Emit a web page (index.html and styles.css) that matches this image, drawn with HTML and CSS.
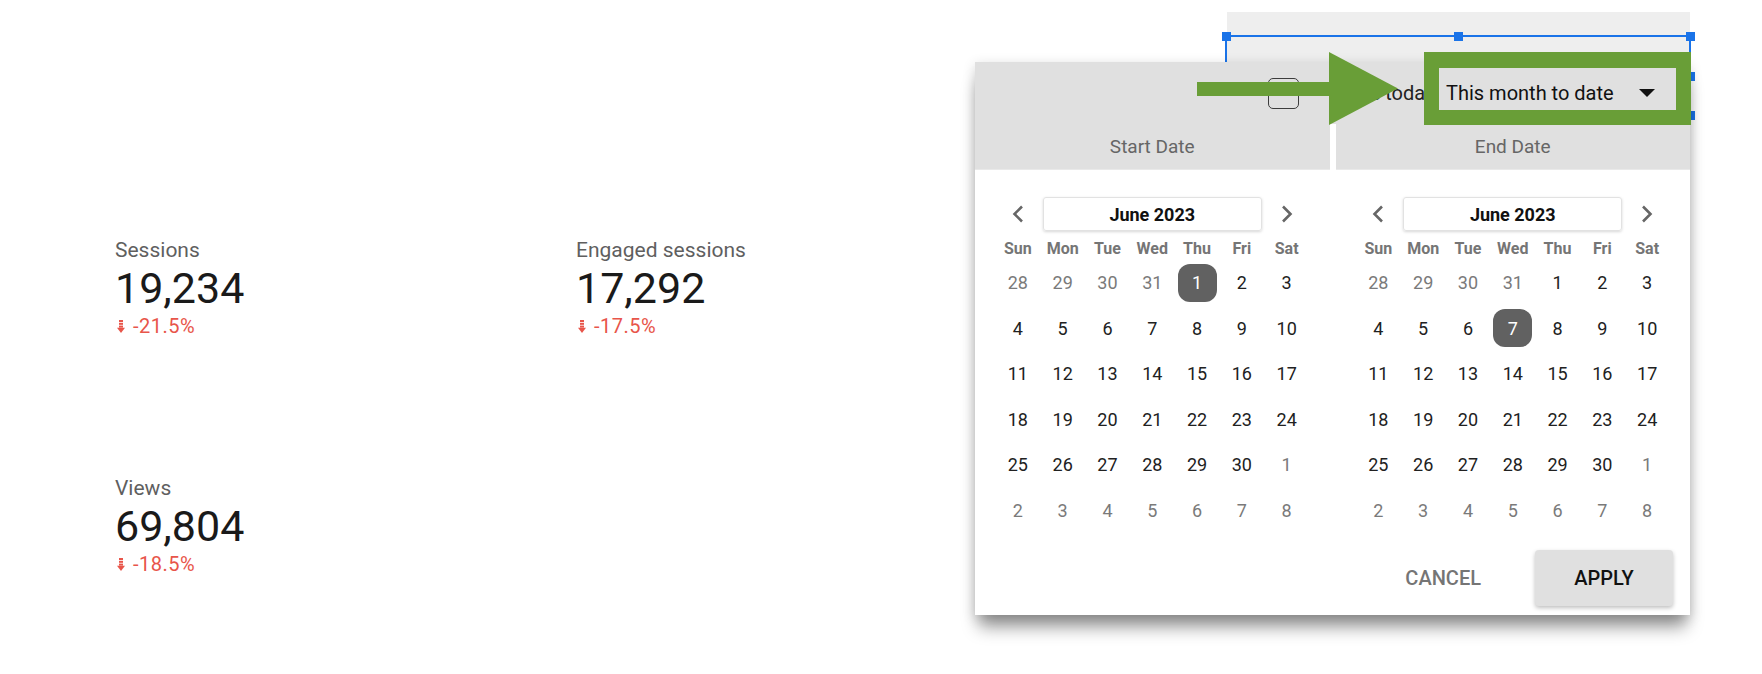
FILE: index.html
```html
<!DOCTYPE html>
<html lang="en">
<head>
<meta charset="utf-8">
<title>Date range control</title>
<link rel="stylesheet" href="styles.css">
</head>
<body>
<div class="page">
  <section class="metrics">
    <div class="metric">
      <div class="metric-label">Sessions</div>
      <div class="metric-value">19,234</div>
      <div class="metric-delta"><svg class="down-icon" width="8" height="13" viewBox="0 0 8 13"><rect x="2" y="0" width="4" height="2"/><rect x="2" y="2.8" width="4" height="2"/><rect x="2" y="5.6" width="4" height="2"/><polygon points="0,7.8 8,7.8 4,13"/></svg><span>-21.5%</span></div>
    </div>
    <div class="metric">
      <div class="metric-label">Engaged sessions</div>
      <div class="metric-value">17,292</div>
      <div class="metric-delta"><svg class="down-icon" width="8" height="13" viewBox="0 0 8 13"><rect x="2" y="0" width="4" height="2"/><rect x="2" y="2.8" width="4" height="2"/><rect x="2" y="5.6" width="4" height="2"/><polygon points="0,7.8 8,7.8 4,13"/></svg><span>-17.5%</span></div>
    </div>
    <div class="metric">
      <div class="metric-label">Views</div>
      <div class="metric-value">69,804</div>
      <div class="metric-delta"><svg class="down-icon" width="8" height="13" viewBox="0 0 8 13"><rect x="2" y="0" width="4" height="2"/><rect x="2" y="2.8" width="4" height="2"/><rect x="2" y="5.6" width="4" height="2"/><polygon points="0,7.8 8,7.8 4,13"/></svg><span>-18.5%</span></div>
    </div>
  </section>

  <div class="control-bg"></div>
  <div class="selection"></div>
  <div class="handle h-tl"></div>
  <div class="handle h-tm"></div>
  <div class="handle h-tr"></div>
  <div class="handle h-rm"></div>
  <div class="handle h-br"></div>

  <div class="popup">
    <div class="popup-top">
      <div class="checkbox"></div>
      <div class="auto-label">since today</div>
      <div class="range-select">
        <span>This month to date</span>
        <svg width="16" height="8" viewBox="0 0 16 8"><polygon points="0,0 16,0 8,8" fill="#111"/></svg>
      </div>
    </div>
    <div class="tabs">
      <div class="tab">Start Date</div>
      <div class="tab">End Date</div>
    </div>
    <div class="calendars">
      <div class="cal">
        <div class="cal-nav">
          <div class="nav-btn"><svg width="14" height="18" viewBox="0 0 14 18"><path d="M11 1.5 L3.5 9 L11 16.5" fill="none" stroke="#666" stroke-width="2.6"/></svg></div>
          <div class="month">June 2023</div>
          <div class="nav-btn"><svg width="14" height="18" viewBox="0 0 14 18"><path d="M3 1.5 L10.5 9 L3 16.5" fill="none" stroke="#666" stroke-width="2.6"/></svg></div>
        </div>
        <div class="grid weekdays">
          <div>Sun</div><div>Mon</div><div>Tue</div><div>Wed</div><div>Thu</div><div>Fri</div><div>Sat</div>
        </div>
        <div class="grid days">
          <div class="day muted">28</div><div class="day muted">29</div><div class="day muted">30</div><div class="day muted">31</div><div class="day sel"><span>1</span></div><div class="day">2</div><div class="day">3</div>
          <div class="day">4</div><div class="day">5</div><div class="day">6</div><div class="day">7</div><div class="day">8</div><div class="day">9</div><div class="day">10</div>
          <div class="day">11</div><div class="day">12</div><div class="day">13</div><div class="day">14</div><div class="day">15</div><div class="day">16</div><div class="day">17</div>
          <div class="day">18</div><div class="day">19</div><div class="day">20</div><div class="day">21</div><div class="day">22</div><div class="day">23</div><div class="day">24</div>
          <div class="day">25</div><div class="day">26</div><div class="day">27</div><div class="day">28</div><div class="day">29</div><div class="day">30</div><div class="day muted">1</div>
          <div class="day muted">2</div><div class="day muted">3</div><div class="day muted">4</div><div class="day muted">5</div><div class="day muted">6</div><div class="day muted">7</div><div class="day muted">8</div>
        </div>
      </div>
      <div class="cal">
        <div class="cal-nav">
          <div class="nav-btn"><svg width="14" height="18" viewBox="0 0 14 18"><path d="M11 1.5 L3.5 9 L11 16.5" fill="none" stroke="#666" stroke-width="2.6"/></svg></div>
          <div class="month">June 2023</div>
          <div class="nav-btn"><svg width="14" height="18" viewBox="0 0 14 18"><path d="M3 1.5 L10.5 9 L3 16.5" fill="none" stroke="#666" stroke-width="2.6"/></svg></div>
        </div>
        <div class="grid weekdays">
          <div>Sun</div><div>Mon</div><div>Tue</div><div>Wed</div><div>Thu</div><div>Fri</div><div>Sat</div>
        </div>
        <div class="grid days">
          <div class="day muted">28</div><div class="day muted">29</div><div class="day muted">30</div><div class="day muted">31</div><div class="day">1</div><div class="day">2</div><div class="day">3</div>
          <div class="day">4</div><div class="day">5</div><div class="day">6</div><div class="day sel"><span>7</span></div><div class="day">8</div><div class="day">9</div><div class="day">10</div>
          <div class="day">11</div><div class="day">12</div><div class="day">13</div><div class="day">14</div><div class="day">15</div><div class="day">16</div><div class="day">17</div>
          <div class="day">18</div><div class="day">19</div><div class="day">20</div><div class="day">21</div><div class="day">22</div><div class="day">23</div><div class="day">24</div>
          <div class="day">25</div><div class="day">26</div><div class="day">27</div><div class="day">28</div><div class="day">29</div><div class="day">30</div><div class="day muted">1</div>
          <div class="day muted">2</div><div class="day muted">3</div><div class="day muted">4</div><div class="day muted">5</div><div class="day muted">6</div><div class="day muted">7</div><div class="day muted">8</div>
        </div>
      </div>
    </div>
    <div class="popup-footer">
      <button class="btn-cancel" type="button">CANCEL</button>
      <button class="btn-apply" type="button">APPLY</button>
    </div>
  </div>

  <svg class="annot-arrow" width="202" height="73" viewBox="0 0 202 73">
    <rect x="0" y="30" width="134" height="14" fill="#699e37"/>
    <polygon points="132,0 201,36.5 132,73" fill="#699e37"/>
  </svg>
  <div class="annot-frame"></div>
</div>
</body>
</html>
```

FILE: styles.css
```css
* { box-sizing: border-box; }
html, body { margin: 0; padding: 0; background: #fff; }
body { font-family: Roboto, "Liberation Sans", Arial, sans-serif; }

.page { position: relative; width: 1762px; height: 674px; overflow: hidden; }

/* Scorecards */
.metrics {
  display: grid;
  grid-template-columns: 461px 461px;
  row-gap: 139px;
  padding: 238px 0 0 115px;
}
.metric-label { font-size: 21px; line-height: 24px; color: #5f5f5f; }
.metric-value { font-size: 43px; line-height: 48px; color: #1a1a1a; margin-top: 2px; }
.metric-delta {
  display: flex; align-items: center; gap: 8px;
  font-size: 20px; line-height: 22px; letter-spacing: 0.5px; color: #e8554a; margin-top: 3px;
  padding-left: 2px;
}
.down-icon { fill: #e8554a; display: block; }

/* Date range control behind the popup */
.control-bg { position: absolute; left: 1227px; top: 12px; width: 463px; height: 60px; background: #eeeeee; }
.selection { position: absolute; left: 1225px; top: 35px; width: 466px; height: 82px; border: 2px solid #1a73e8; }
.handle { position: absolute; width: 9px; height: 9px; background: #1a73e8; }
.h-tl { left: 1221.5px; top: 31.5px; }
.h-tm { left: 1453.5px; top: 31.5px; }
.h-tr { left: 1685.5px; top: 31.5px; }
.h-rm { left: 1685.5px; top: 72px; }
.h-br { left: 1685.5px; top: 111px; }

/* Popup */
.popup {
  position: absolute; left: 975px; top: 62px; width: 715px; height: 553px; z-index: 1;
  background: #fff;
  display: flex; flex-direction: column;
  box-shadow: 0 16px 16px -4px rgba(0,0,0,0.4), 0 3px 12px rgba(0,0,0,0.16);
}
.popup-top {
  height: 62px; background: #e0e0e0;
  display: flex; align-items: center; padding-left: 293px;
}
.checkbox { width: 31px; height: 31px; border: 1.5px solid #3c3c3c; border-radius: 5px; flex-shrink: 0; }
.auto-label { margin-left: 34px; width: 95px; flex-shrink: 0; white-space: nowrap; font-size: 20px; color: #222; }
.range-select {
  margin-left: auto; margin-right: 13px; width: 238px; flex-shrink: 0;
  display: flex; justify-content: space-between; align-items: center;
  padding: 0 22px 0 7px; font-size: 20px; color: #111; white-space: nowrap;
}
.range-select svg { display: block; }

.tabs { display: flex; gap: 6px; height: 46px; }
.tab { flex: 1; background: #e0e0e0; text-align: center; line-height: 46px; font-size: 19px; color: #666; border-bottom: 1px solid #e9e9e9; }

.calendars { display: flex; gap: 6px; padding-top: 27px; }
.cal { flex: 1; display: flex; flex-direction: column; align-items: center; }
.cal-nav {
  display: grid; grid-template-columns: 44.8px 1fr 44.8px;
  width: 313.6px; height: 34px; align-items: center;
}
.nav-btn { display: flex; justify-content: center; align-items: center; }
.nav-btn svg { display: block; }
.month {
  height: 34px; margin: 0 2.5px;
  border: 1px solid #e2e2e2; border-radius: 3px;
  box-shadow: 0 1px 3px rgba(0,0,0,0.16);
  display: flex; align-items: center; justify-content: center;
  font-size: 18px; font-weight: 700; color: #111;
}
.grid { display: grid; grid-template-columns: repeat(7, 44.8px); }
.weekdays {
  margin-top: 5px; height: 24px; align-items: center; text-align: center;
  font-size: 16px; font-weight: 700; color: #757575;
}
.days { grid-auto-rows: 45.5px; }
.day { display: flex; align-items: center; justify-content: center; font-size: 18px; color: #212121; }
.day.muted { color: #7a7a7a; }
.day.sel span {
  width: 39px; height: 38px; border-radius: 12px;
  background: #616161; color: #fff;
  display: flex; align-items: center; justify-content: center;
}

.popup-footer {
  display: flex; justify-content: flex-end; align-items: center;
  gap: 36px; margin-top: 17px; padding: 0 17px 9px 0;
}
.btn-cancel, .btn-apply {
  font-family: inherit; font-size: 20px; font-weight: 500; border: none; height: 56px; cursor: pointer;
}
.btn-cancel { background: none; color: #757575; padding: 0 18px; }
.btn-apply {
  width: 138px; background: #e0e0e0; color: #111; border-radius: 4px;
  box-shadow: 0 2px 4px rgba(0,0,0,0.25);
}

/* Annotation overlays */
.annot-arrow { position: absolute; left: 1197px; top: 52px; display: block; z-index: 2; }
.annot-frame {
  position: absolute; left: 1424px; top: 52px; width: 267px; height: 73px; z-index: 2;
  border: 15px solid #699e37; border-top-width: 16px;
}
```
